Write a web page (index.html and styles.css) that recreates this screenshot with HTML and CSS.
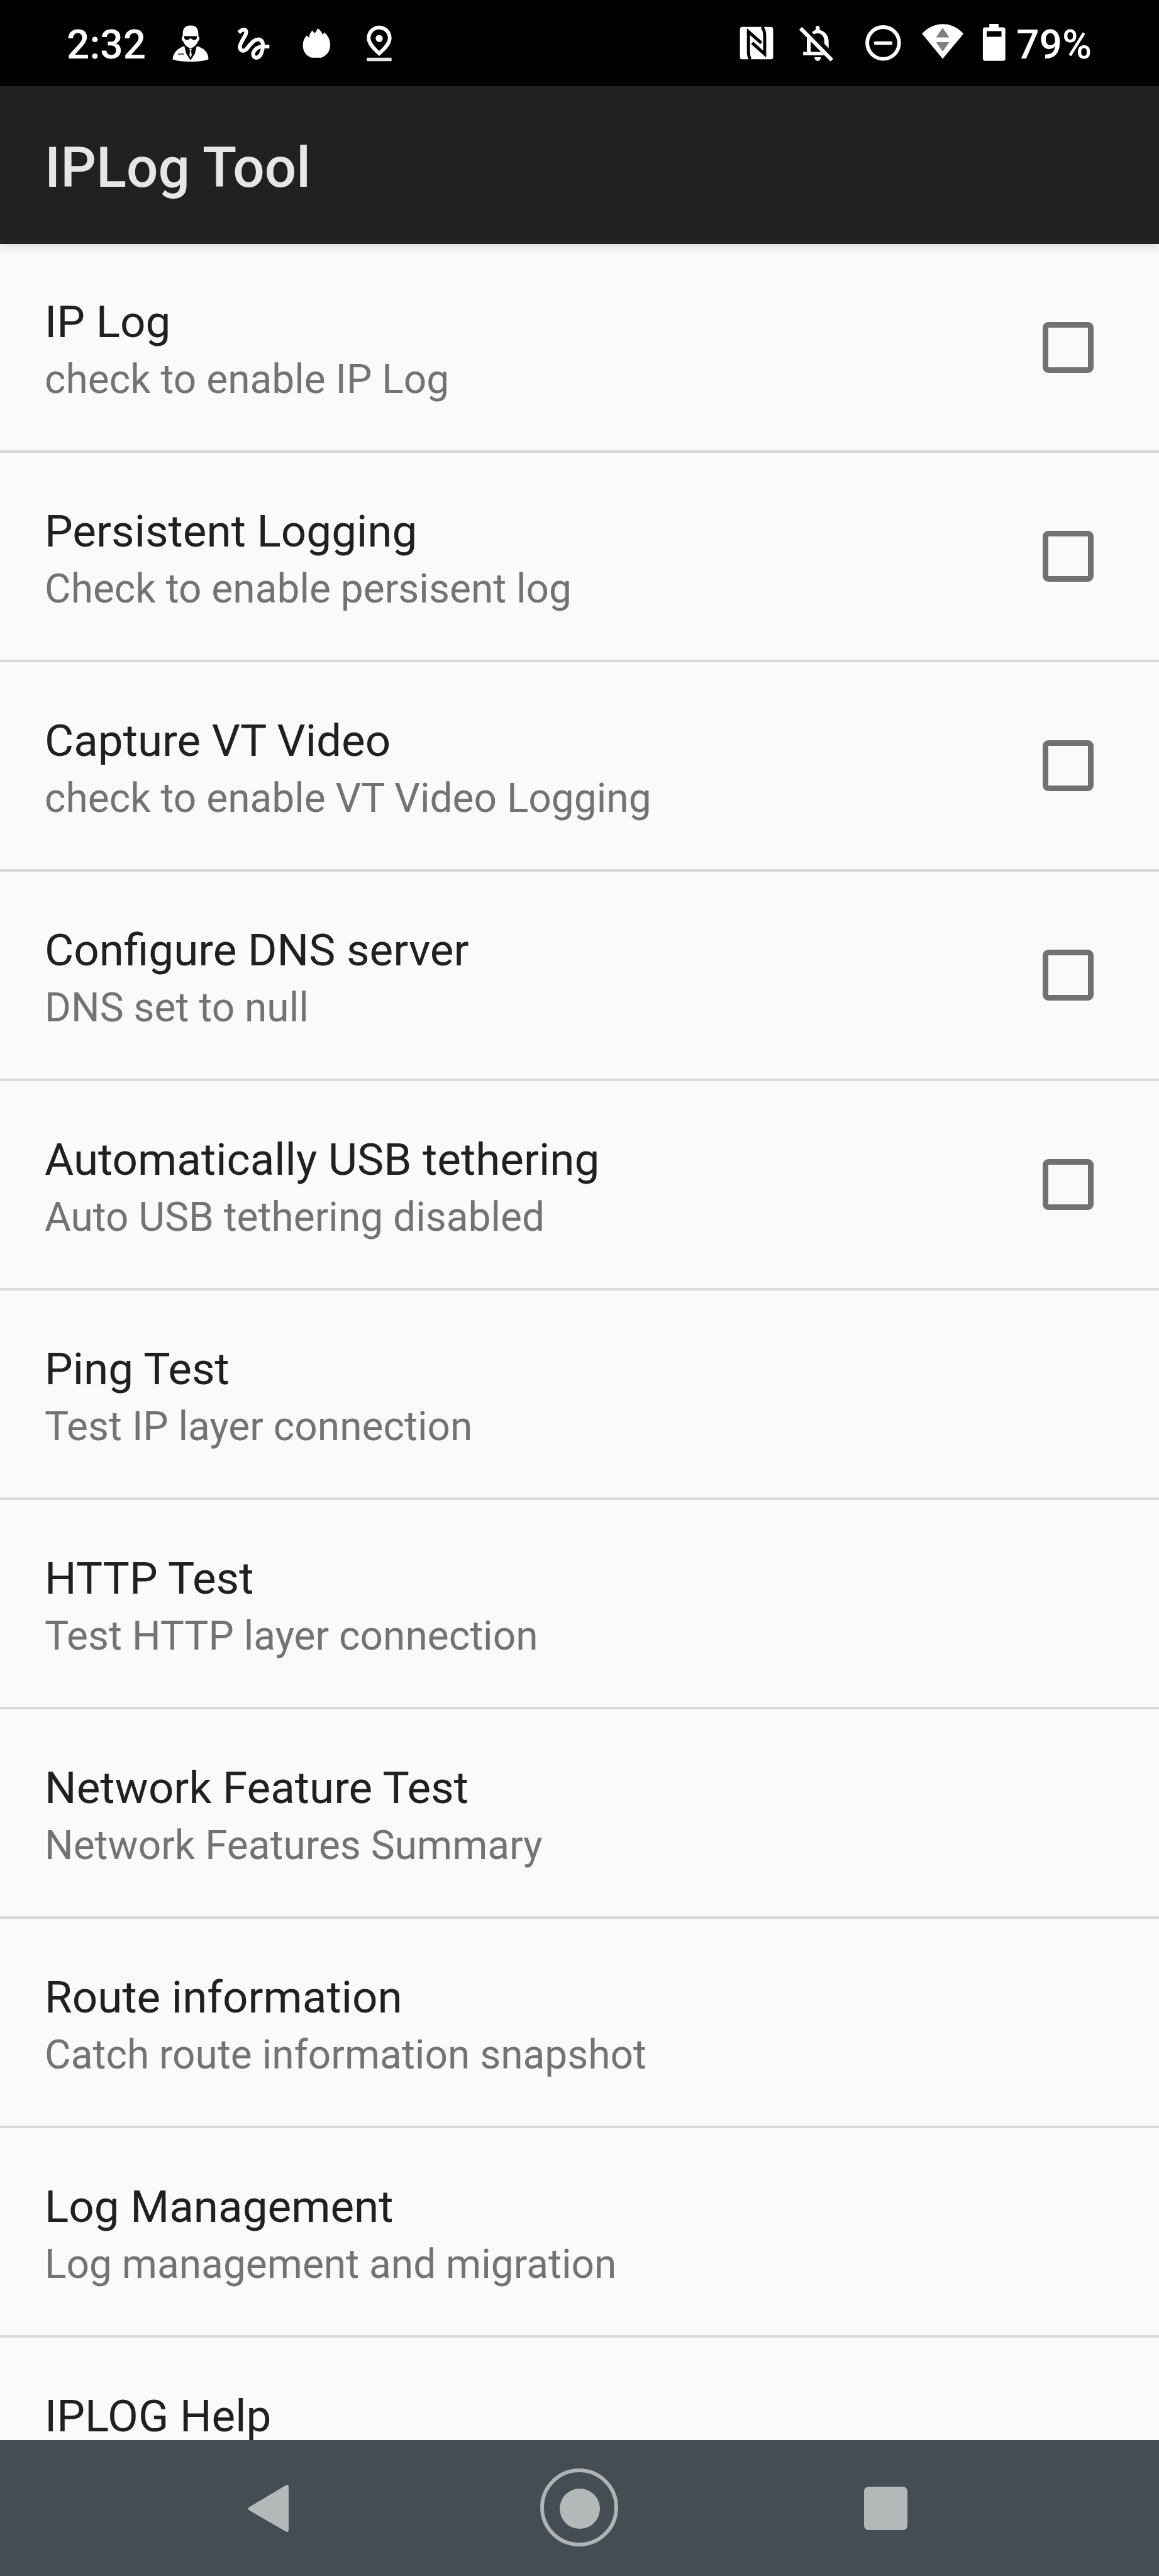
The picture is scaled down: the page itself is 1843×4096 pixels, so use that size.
FILE: index.html
```html
<!DOCTYPE html>
<html lang="en">
<head>
    <meta charset="UTF-8">
    <meta name="viewport" content="width=device-width, initial-scale=1.0">
    <title>IPLog Tool</title>
    <link rel="stylesheet" href="styles.css">
</head>
<body>
    <div class="screen">
        <div class="status-bar">
            <span class="time">2:32</span>
            <div class="status-icons">
                <!-- agent -->
                <svg class="icon" viewBox="763 56 350 350">
                    <path fill="#fff" d="M888 170C884 125 900 103 938 103S992 125 988 170C1000 180 996 198 987 204C978 226 962 247 938 249C914 247 898 226 889 204C880 198 876 180 888 170Z"/>
                    <path fill="#000" d="M896 172H980V177C978 191 972 198 960 197C948 195 944 186 938 186S928 195 916 197C904 198 898 191 896 177Z"/>
                    <path fill="#fff" d="M898 236L910 285L938 328L966 285L978 236C1022 248 1054 274 1054 322C1020 342 856 342 822 322C826 274 860 248 898 236Z"/>
                    <path fill="#ddd" d="M929 253H947L942 268L946 296L938 312L930 296L934 268Z"/>
                    <path fill="#777" d="M857 282H897V294H857Z"/>
                </svg>
                <!-- squiggle -->
                <svg class="icon" viewBox="30 56 350 350">
                    <path fill="none" stroke="#fff" stroke-width="25" d="M110 149C128 130 148 122 157 138C168 160 119 206 117 242C118 268 142 274 161 255C188 222 213 184 248 195C275 207 268 254 255 285C242 315 216 318 206 301C194 278 223 239 263 239H308"/>
                </svg>
                <!-- flame -->
                <svg class="icon" viewBox="438 56 350 350">
                    <path fill="#fff" d="M526 230C526 205 534 187 550 168L566 181C568 163 574 148 587 134L601 153C610 146 616 136 621 122C637 130 648 146 653 163L664 149C690 168 703 197 703 228C703 268 683 296 647 311H581C545 297 526 270 526 230Z"/>
                </svg>
                <!-- location pin -->
                <svg class="icon" viewBox="843 56 350 350">
                    <path fill="none" stroke="#fff" stroke-width="24" d="M1018 284C980 250 950 218 950 184A68 68 0 0 1 1086 184C1086 218 1056 250 1018 284Z"/>
                    <circle cx="1018" cy="187" r="23" fill="#fff"/>
                    <path fill="#e6e6e6" d="M938 311H1098V334H938Z"/>
                </svg>
            </div>
            <div class="status-icons status-right">
                <!-- nfc -->
                <svg class="icon" viewBox="25 56 350 350">
                    <rect x="109" y="112" width="215" height="210" rx="16" fill="#fff"/>
                    <path fill="none" stroke="#000" stroke-width="20" d="M176 322C165 306 164 292 164 270V143L248 216M252 112C266 130 269 148 269 170V288L188 215"/>
                </svg>
                <!-- muted bell -->
                <svg class="icon" viewBox="439 56 350 350">
                    <path fill="#fff" d="M582 146C590 139 599 134 606 131V118C606 100 632 100 632 118V131C669 141 690 170 690 208V250L662 222V208C662 173 644 154 620 154C609 154 601 157 594 161ZM549 180L574 205V274H640L663 296H525V274H549ZM598 308H640C637 340 601 340 598 308Z"/>
                    <path stroke="#fff" stroke-width="25" d="M508 121L711 327"/>
                </svg>
                <!-- do not disturb -->
                <svg class="icon" viewBox="838 56 350 350">
                    <circle cx="1035" cy="216" r="103" fill="none" stroke="#fff" stroke-width="24"/>
                    <path stroke="#fff" stroke-width="22" stroke-linecap="round" d="M986 217H1084"/>
                </svg>
                <!-- wifi -->
                <svg class="icon" viewBox="45 56 350 350">
                    <path fill="#fff" d="M86 156C163 73 278 73 355 156L220 318Z"/>
                    <path fill="#808080" d="M220 118L263 180H177ZM177 211H263L220 272Z"/>
                </svg>
                <div class="battery">
                    <svg class="battery-icon" viewBox="453 56 204 350">
                        <path fill="#fff" fill-rule="evenodd" d="M523 92H583V115H612Q627 115 627 130V318Q627 332 613 332H495Q481 332 481 318V130Q481 115 496 115H523ZM506 139V176H602V139Z"/>
                    </svg>
                    <span>79%</span>
                </div>
            </div>
        </div>

        <header class="app-bar">
            <h1>IPLog Tool</h1>
        </header>

        <main class="prefs">
            <label class="pref">
                <span class="pref-text">
                    <span class="pref-title">IP Log</span>
                    <span class="pref-summary">check to enable IP Log</span>
                </span>
                <input type="checkbox">
            </label>
            <label class="pref">
                <span class="pref-text">
                    <span class="pref-title">Persistent Logging</span>
                    <span class="pref-summary">Check to enable persisent log</span>
                </span>
                <input type="checkbox">
            </label>
            <label class="pref">
                <span class="pref-text">
                    <span class="pref-title">Capture VT Video</span>
                    <span class="pref-summary">check to enable VT Video Logging</span>
                </span>
                <input type="checkbox">
            </label>
            <label class="pref">
                <span class="pref-text">
                    <span class="pref-title">Configure DNS server</span>
                    <span class="pref-summary">DNS set to null</span>
                </span>
                <input type="checkbox">
            </label>
            <label class="pref">
                <span class="pref-text">
                    <span class="pref-title">Automatically USB tethering</span>
                    <span class="pref-summary">Auto USB tethering disabled</span>
                </span>
                <input type="checkbox">
            </label>
            <button class="pref">
                <span class="pref-text">
                    <span class="pref-title">Ping Test</span>
                    <span class="pref-summary">Test IP layer connection</span>
                </span>
            </button>
            <button class="pref">
                <span class="pref-text">
                    <span class="pref-title">HTTP Test</span>
                    <span class="pref-summary">Test HTTP layer connection</span>
                </span>
            </button>
            <button class="pref">
                <span class="pref-text">
                    <span class="pref-title">Network Feature Test</span>
                    <span class="pref-summary">Network Features Summary</span>
                </span>
            </button>
            <button class="pref">
                <span class="pref-text">
                    <span class="pref-title">Route information</span>
                    <span class="pref-summary">Catch route information snapshot</span>
                </span>
            </button>
            <button class="pref">
                <span class="pref-text">
                    <span class="pref-title">Log Management</span>
                    <span class="pref-summary">Log management and migration</span>
                </span>
            </button>
            <button class="pref">
                <span class="pref-text">
                    <span class="pref-title">IPLOG Help</span>
                </span>
            </button>
        </main>

        <nav class="nav-bar">
            <button aria-label="Back">
                <svg viewBox="0 0 130 130">
                    <path d="M27 63L84 29Q89 26 89 32V99Q89 105 84 102L27 69Q22 66 27 63Z"/>
                </svg>
            </button>
            <button aria-label="Home">
                <svg viewBox="0 0 130 130">
                    <circle class="ring" cx="64" cy="64" r="59"/>
                    <circle cx="65" cy="66" r="32"/>
                </svg>
            </button>
            <button aria-label="Recent apps">
                <svg viewBox="0 0 130 130">
                    <rect x="30" y="31" width="69" height="69" rx="7"/>
                </svg>
            </button>
        </nav>
    </div>
</body>
</html>
```
FILE: styles.css
```css
* {
    box-sizing: border-box;
}

body {
    margin: 0;
    font-family: Roboto, sans-serif;
    background-color: #fafafa;
}

button {
    font-family: inherit;
    border: none;
    background: none;
    padding: 0;
    cursor: pointer;
}

.screen {
    display: flex;
    flex-direction: column;
    height: 100vh;
}

/* Status bar */
.status-bar {
    display: flex;
    align-items: center;
    flex-shrink: 0;
    gap: 28px;
    height: 137px;
    padding: 6px 107px 0 106px;
    background-color: #000;
    color: #fff;
    font-size: 64px;
    font-weight: 500;
}

.status-icons {
    display: flex;
    align-items: center;
    gap: 14px;
}

.status-right {
    margin-left: auto;
}

.icon {
    width: 86px;
    height: 86px;
}

.battery {
    display: flex;
    align-items: center;
    gap: 10px;
}

.battery-icon {
    width: 50px;
    height: 86px;
}

/* App bar */
.app-bar {
    display: flex;
    align-items: center;
    flex-shrink: 0;
    height: 251px;
    padding: 8px 71px 0;
    background-color: #212121;
    box-shadow: 0 4px 16px rgba(0, 0, 0, 0.15);
    position: relative;
    z-index: 1;
}

.app-bar h1 {
    margin: 0;
    font-size: 89px;
    font-weight: 500;
    color: #e6e6e6;
}

/* Preference list */
.prefs {
    flex: 1;
    min-height: 0;
    overflow: hidden;
}

.pref {
    display: flex;
    align-items: center;
    justify-content: space-between;
    width: 100%;
    min-height: 333px;
    padding: 0 104px 0 71px;
    border-bottom: 4px solid #d9d9d9;
    text-align: left;
    cursor: pointer;
}

/* the first row sits right under the app bar */
.pref:first-child {
    min-height: 332px;
}

.pref-text {
    display: flex;
    flex-direction: column;
    min-height: 184px;
}

.pref-title {
    font-size: 71px;
    line-height: 104px;
    color: #202020;
}

.pref-summary {
    font-size: 64px;
    line-height: 80px;
    color: #737373;
}

.pref input {
    appearance: none;
    width: 81px;
    height: 81px;
    margin: 0;
    border: 9px solid #717171;
    border-radius: 9px;
}

.pref input:checked {
    background-color: #717171;
}

/* Navigation bar */
.nav-bar {
    display: grid;
    grid-template-columns: repeat(3, 1fr);
    flex-shrink: 0;
    height: 216px;
    padding: 0 191px;
    background-color: #454d54;
}

.nav-bar button {
    display: flex;
    align-items: center;
    justify-content: center;
}

.nav-bar svg {
    width: 130px;
    height: 130px;
    fill: #b3b8b9;
}

.nav-bar .ring {
    fill: none;
    stroke: #aeb3b6;
    stroke-width: 6;
}
```
